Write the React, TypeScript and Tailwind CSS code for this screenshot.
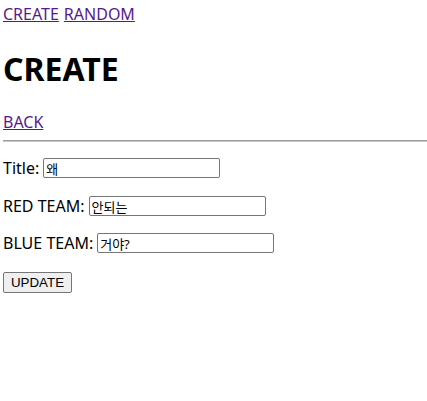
export default function App() {
  return (
    <div className="min-h-screen bg-white pl-[3px] text-black [font-family:'Noto_Sans','Noto_Sans_CJK_KR',sans-serif]">
      <div className="mt-[3px] flex h-[22px] items-center gap-[5px] text-[16px] leading-[22px]">
        <a href="#" className="text-[#551a8b] underline">CREATE</a>
        <a href="#" className="text-[#551a8b] underline">RANDOM</a>
      </div>
      <h1 className="mt-[24px] h-[40px] text-[32px] font-bold leading-[40px]">CREATE</h1>
      <div className="mt-[22px] h-[22px] text-[16px] leading-[22px]">
        <a href="#" className="text-[#551a8b] underline">BACK</a>
      </div>
      <hr className="mt-[7px] border-t border-b border-t-[#9a9a9a] border-b-[#c8c8c8]" />
      <form className="text-[16px]" onSubmit={e => e.preventDefault()}>
        <div className="mt-[16px] flex h-[20px] items-center">
          <span className="mr-[4px]">Title:</span>
          <input
            type="text"
            defaultValue="왜"
            className="h-[20px] w-[177px] rounded-[2px] border border-[#767676] px-[2px] text-[13px]"
          />
        </div>
        <div className="mt-[18px] flex h-[20px] items-center">
          <span className="mr-[4px]">RED TEAM:</span>
          <input
            type="text"
            defaultValue="안되는"
            className="h-[20px] w-[177px] rounded-[2px] border border-[#767676] px-[2px] text-[13px]"
          />
        </div>
        <div className="mt-[17px] flex h-[20px] items-center">
          <span className="mr-[4px]">BLUE TEAM:</span>
          <input
            type="text"
            defaultValue="거야?"
            className="h-[20px] w-[177px] rounded-[2px] border border-[#767676] px-[2px] text-[13px]"
          />
        </div>
        <div className="mt-[19px] flex">
          <button
            type="submit"
            className="h-[21px] w-[69px] rounded-[2px] border border-[#767676] bg-[#efefef] text-[13.33px] leading-none [font-family:'Liberation_Sans',Arial,sans-serif]"
          >
            UPDATE
          </button>
        </div>
      </form>
    </div>
  )
}
